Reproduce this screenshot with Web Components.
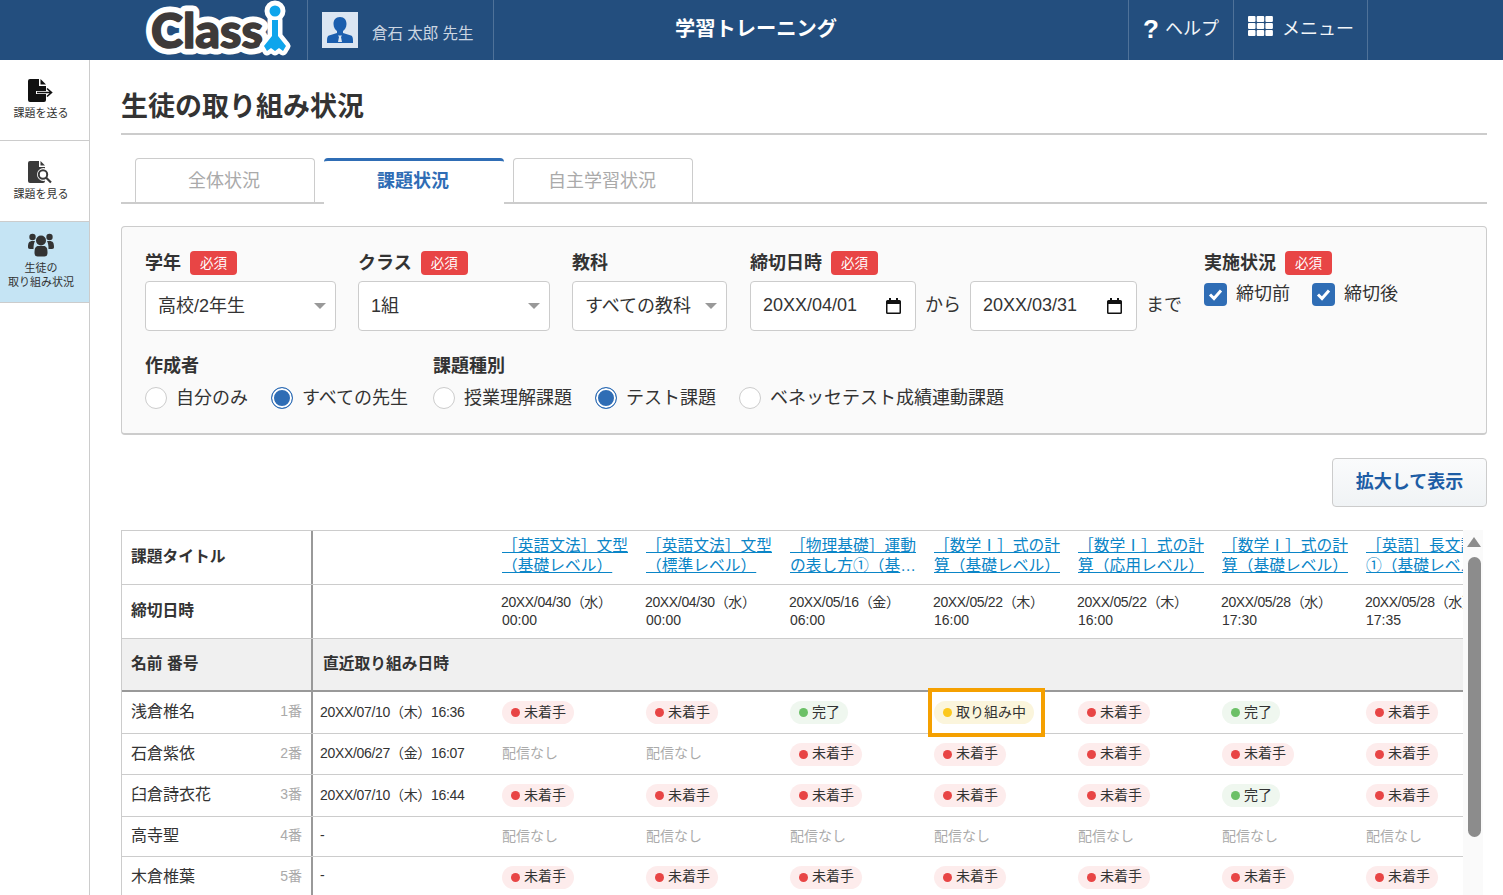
<!DOCTYPE html>
<html lang="ja">
<head>
<meta charset="utf-8">
<title>生徒の取り組み状況</title>
<style>
    html, body {
        margin: 0;
        height: 100%;
        overflow: hidden;
        background: #fff;
        color: #333;
        font-family: "Liberation Sans", "Noto Sans CJK JP", sans-serif;
    }
</style>
</head>
<body>

<app-shell>
    <app-header slot="header" user="倉石 太郎 先生" title="学習トレーニング"></app-header>

    <side-nav slot="nav">
        <nav-item>
            <svg slot="icon" width="26" height="24" viewBox="0 0 26 24">
                <path fill="#111" d="M2 0h9v7h7v5H8v3h10v6a2 2 0 0 1-2 2H2a2 2 0 0 1-2-2V2a2 2 0 0 1 2-2z"/>
                <path fill="#111" d="M12.500 0l5.500 5.500h-5.500z"/>
                <path fill="none" stroke="#111" stroke-width="1.600" d="M9 13.500h14M19 9.500l4.500 4-4.500 4"/>
            </svg>
            課題を送る
        </nav-item>
        <nav-item>
            <svg slot="icon" width="26" height="24" viewBox="0 0 26 24">
                <path fill="#3a3a3a" d="M2 1h9v6h6v14a2 2 0 0 1-2 2H2a2 2 0 0 1-2-2V3a2 2 0 0 1 2-2z"/>
                <path fill="#3a3a3a" d="M12.500 1l4.500 4.500h-4.500z"/>
                <circle cx="15.500" cy="14.500" r="6.500" fill="#fff"/>
                <circle cx="15" cy="14.500" r="4.200" fill="none" stroke="#3a3a3a" stroke-width="2"/>
                <path stroke="#3a3a3a" stroke-width="2.200" d="M18 17.500l5 5"/>
            </svg>
            課題を見る
        </nav-item>
        <nav-item active>
            <svg slot="icon" width="26" height="24" viewBox="0 0 26 24">
                <g fill="#333">
                    <circle cx="4.500" cy="4" r="3.200"/>
                    <circle cx="21.500" cy="4" r="3.200"/>
                    <path d="M0 14c0-4 1-6 4.500-6H7c-1 2-1.500 4-1.500 8H2c-1.500 0-2-1-2-2zM26 14c0-4-1-6-4.500-6H19c1 2 1.500 4 1.500 8H24c1.500 0 2-1 2-2z"/>
                    <circle cx="13" cy="7.500" r="5"/>
                    <path d="M6.500 20c0-5 1-7 4-7h5c3 0 4 2 4 7 0 2.500-1.500 3.500-3 3.500h-7c-1.500 0-3-1-3-3.500z"/>
                </g>
            </svg>
            生徒の<br>取り組み状況
        </nav-item>
    </side-nav>

    <page-title>生徒の取り組み状況</page-title>

    <tab-bar>
        <tab-item>全体状況</tab-item>
        <tab-item active>課題状況</tab-item>
        <tab-item>自主学習状況</tab-item>
    </tab-bar>

    <filter-panel>
        <filter-group slot="top" label="学年" required>
            <select-box width="191">高校/2年生</select-box>
        </filter-group>
        <filter-group slot="top" label="クラス" required>
            <select-box width="192">1組</select-box>
        </filter-group>
        <filter-group slot="top" label="教科">
            <select-box width="155">すべての教科</select-box>
        </filter-group>
        <filter-group slot="top" label="締切日時" required class="dates">
            <date-box width="166">20XX/04/01</date-box>
            <span class="word">から</span>
            <date-box>20XX/03/31</date-box>
            <span class="word">まで</span>
        </filter-group>
        <filter-group slot="top" label="実施状況" required gap="22">
            <check-box>締切前</check-box>
            <check-box>締切後</check-box>
        </filter-group>

        <filter-group slot="bottom" label="作成者" small gap="23">
            <radio-box>自分のみ</radio-box>
            <radio-box checked>すべての先生</radio-box>
        </filter-group>
        <filter-group slot="bottom" label="課題種別" small gap="23">
            <radio-box>授業理解課題</radio-box>
            <radio-box checked>テスト課題</radio-box>
            <radio-box>ベネッセテスト成績連動課題</radio-box>
        </filter-group>
    </filter-panel>

    <action-bar><action-button>拡大して表示</action-button></action-bar>

    <status-table>
        <table-row height="54" name="課題タイトル" strong>
            <title-link>［英語文法］文型（基礎レベル）</title-link>
            <title-link>［英語文法］文型（標準レベル）</title-link>
            <title-link>［物理基礎］運動の表し方①（基礎レベル）</title-link>
            <title-link>［数学Ⅰ］式の計算（基礎レベル）</title-link>
            <title-link>［数学Ⅰ］式の計算（応用レベル）</title-link>
            <title-link>［数学Ⅰ］式の計算（基礎レベル）</title-link>
            <title-link>［英語］長文読解①（基礎レベル）</title-link>
        </table-row>
        <table-row height="54" name="締切日時" strong>
            <due-date day="20XX/04/30（水）" time="00:00"></due-date>
            <due-date day="20XX/04/30（水）" time="00:00"></due-date>
            <due-date day="20XX/05/16（金）" time="06:00"></due-date>
            <due-date day="20XX/05/22（木）" time="16:00"></due-date>
            <due-date day="20XX/05/22（木）" time="16:00"></due-date>
            <due-date day="20XX/05/28（水）" time="17:30"></due-date>
            <due-date day="20XX/05/28（水）" time="17:35"></due-date>
        </table-row>
        <table-row height="53" name="名前 番号" recent="直近取り組み日時" strong shaded></table-row>
        <table-row height="42" name="浅倉椎名" no="1番" recent="20XX/07/10（木）16:36">
            <status-pill state="todo"></status-pill>
            <status-pill state="todo"></status-pill>
            <status-pill state="done"></status-pill>
            <status-pill state="doing" marked></status-pill>
            <status-pill state="todo"></status-pill>
            <status-pill state="done"></status-pill>
            <status-pill state="todo"></status-pill>
        </table-row>
        <table-row height="41" name="石倉紫依" no="2番" recent="20XX/06/27（金）16:07">
            <status-pill state="none"></status-pill>
            <status-pill state="none"></status-pill>
            <status-pill state="todo"></status-pill>
            <status-pill state="todo"></status-pill>
            <status-pill state="todo"></status-pill>
            <status-pill state="todo"></status-pill>
            <status-pill state="todo"></status-pill>
        </table-row>
        <table-row height="42" name="臼倉詩衣花" no="3番" recent="20XX/07/10（木）16:44">
            <status-pill state="todo"></status-pill>
            <status-pill state="todo"></status-pill>
            <status-pill state="todo"></status-pill>
            <status-pill state="todo"></status-pill>
            <status-pill state="todo"></status-pill>
            <status-pill state="done"></status-pill>
            <status-pill state="todo"></status-pill>
        </table-row>
        <table-row height="40" name="高寺聖" no="4番" recent="-">
            <status-pill state="none"></status-pill>
            <status-pill state="none"></status-pill>
            <status-pill state="none"></status-pill>
            <status-pill state="none"></status-pill>
            <status-pill state="none"></status-pill>
            <status-pill state="none"></status-pill>
            <status-pill state="none"></status-pill>
        </table-row>
        <table-row height="41" name="木倉椎葉" no="5番" recent="-">
            <status-pill state="todo"></status-pill>
            <status-pill state="todo"></status-pill>
            <status-pill state="todo"></status-pill>
            <status-pill state="todo"></status-pill>
            <status-pill state="todo"></status-pill>
            <status-pill state="todo"></status-pill>
            <status-pill state="todo"></status-pill>
        </table-row>
    </status-table>
</app-shell>

<script>
function shadow(host, html) {

    host.attachShadow({mode: 'open'}).innerHTML = html;
}

class AppShell extends HTMLElement {

    constructor() {

        super();

        shadow(this, `
            <style>
                :host {
                    display: flex;
                    flex-direction: column;
                    height: 895px;
                    overflow: hidden;
                }

                .body {
                    display: flex;
                    flex: 1;
                    min-height: 0;
                }

                main {
                    flex: 1;
                    min-width: 0;
                    padding: 0 16px 0 31px;
                }
            </style>
            <slot name="header"></slot>
            <div class="body">
                <slot name="nav"></slot>
                <main><slot></slot></main>
            </div>
        `);
    }
}

class AppHeader extends HTMLElement {

    constructor() {

        super();

        shadow(this, `
            <style>
                :host {
                    display: flex;
                    flex: none;
                    height: 60px;
                    background: #234e7e;
                    color: #fff;
                }

                .cell {
                    display: flex;
                    align-items: center;
                    border-right: 1px solid #4f7299;
                    box-sizing: border-box;
                }

                .logo { width: 308px; padding-left: 143px; }
                .user { width: 186px; padding-left: 14px; }
                .name { margin: 4px 0 0 14px; font-size: 15.500px; color: #ccd6e2; white-space: nowrap; }
                .title { width: 635px; justify-content: center; padding: 0 110px 6px 0; font-size: 20.250px; font-weight: 700; }
                .help { width: 105px; padding: 0 0 6px 14px; font-size: 18px; }
                .menu { width: 134px; padding: 0 0 6px 14px; font-size: 18px; }
                .mark { position: relative; top: 2px; font-size: 26px; font-weight: 700; margin-right: 6px; }
                .help span:last-child, .menu span { color: #f2f5f8; }
                .grid { margin: -2px 9px 0 0; }
            </style>
            <div class="cell logo">
                <svg width="150" height="60" viewBox="0 0 150 60">
                    <g font-family="Lato, 'Liberation Sans', sans-serif" font-weight="900" font-size="47" stroke-linejoin="round">
                        <text x="8" y="48" textLength="112" lengthAdjust="spacingAndGlyphs" fill="#fff" stroke="#fff" stroke-width="13">Class</text>
                        <text x="8" y="48" textLength="112" lengthAdjust="spacingAndGlyphs" fill="#3e3a39" stroke="#3e3a39" stroke-width="1.500">Class</text>
                    </g>
                    <g fill="#fff" stroke="#fff" stroke-width="9" stroke-linejoin="round">
                        <circle cx="132" cy="11" r="6"/>
                        <path d="M129 20h6v16l8 10-3 5-4-3-4 3-4-3-4 3-3-5 8-10z"/>
                    </g>
                    <circle cx="132" cy="11" r="5.500" fill="#0ea5ec"/>
                    <path fill="#0ea5ec" d="M129 20h6v16l8 10-3 5-4-3-4 3-4-3-4 3-3-5 8-10z"/>
                </svg>
            </div>
            <div class="cell user">
                <svg width="36" height="36" viewBox="0 0 36 36">
                    <rect width="36" height="36" fill="#dce6f2"/>
                    <path fill="#1b5eae" d="M18 5c4.500 0 6.500 3 6.500 7 0 3.500-2 6-3.500 7v2l8 2.500c1.500.5 2 2 2 5.500v2H5v-2c0-3.500.5-5 2-5.500l8-2.500v-2c-1.500-1-3.500-3.500-3.500-7 0-4 2-7 6.500-7z"/>
                    <path fill="#dce6f2" d="M16 23.500h4l-1 1.500 1 5h-4l1-5z"/>
                </svg>
                <span class="name">${this.getAttribute('user')}</span>
            </div>
            <div class="cell title">${this.getAttribute('title')}</div>
            <div class="cell help"><span class="mark">?</span><span>ヘルプ</span></div>
            <div class="cell menu">
                <svg class="grid" width="25" height="20" viewBox="0 0 25 20" fill="#fff">
                    <rect width="7.500" height="6" rx="1"/><rect x="8.700" width="7.500" height="6" rx="1"/><rect x="17.400" width="7.500" height="6" rx="1"/>
                    <rect y="7" width="7.500" height="6" rx="1"/><rect x="8.700" y="7" width="7.500" height="6" rx="1"/><rect x="17.400" y="7" width="7.500" height="6" rx="1"/>
                    <rect y="14" width="7.500" height="6" rx="1"/><rect x="8.700" y="14" width="7.500" height="6" rx="1"/><rect x="17.400" y="14" width="7.500" height="6" rx="1"/>
                </svg>
                <span>メニュー</span>
            </div>
        `);
    }
}

class SideNav extends HTMLElement {

    constructor() {

        super();

        shadow(this, `
            <style>
                :host {
                    display: block;
                    flex: none;
                    width: 90px;
                    box-sizing: border-box;
                    border-right: 1px solid #ccc;
                }
            </style>
            <slot></slot>
        `);
    }
}

class NavItem extends HTMLElement {

    constructor() {

        super();

        shadow(this, `
            <style>
                :host {
                    display: flex;
                    flex-direction: column;
                    align-items: center;
                    box-sizing: border-box;
                    height: 81px;
                    padding: 19px 7px 0 0;
                    border-bottom: 1px solid #ccc;
                    font-size: 11px;
                    line-height: 14px;
                    text-align: center;
                    white-space: nowrap;
                    color: #333;
                }

                :host([active]) {
                    background: #c5e4f4;
                    padding-top: 11px;
                }

                .icon {
                    height: 24px;
                    margin-bottom: 3px;
                }

                :host([active]) .icon {
                    margin-bottom: 4px;
                }
            </style>
            <div class="icon"><slot name="icon"></slot></div>
            <div><slot></slot></div>
        `);
    }
}

class PageTitle extends HTMLElement {

    constructor() {

        super();

        shadow(this, `
            <style>
                :host {
                    display: block;
                    height: 75px;
                    box-sizing: border-box;
                    padding-top: 27px;
                    border-bottom: 2px solid #ccc;
                    font-size: 27px;
                    line-height: 40px;
                    font-weight: 700;
                    color: #333;
                }
            </style>
            <slot></slot>
        `);
    }
}

class TabBar extends HTMLElement {

    constructor() {

        super();

        shadow(this, `
            <style>
                :host {
                    display: flex;
                    gap: 9px;
                    margin-top: 23px;
                    padding-left: 14px;
                    height: 46px;
                    box-sizing: border-box;
                    border-bottom: 2px solid #ccc;
                }
            </style>
            <slot></slot>
        `);
    }
}

class TabItem extends HTMLElement {

    constructor() {

        super();

        shadow(this, `
            <style>
                :host {
                    display: flex;
                    align-items: center;
                    justify-content: center;
                    width: 180px;
                    height: 44px;
                    box-sizing: border-box;
                    padding: 0 2px 4px 0;
                    background: #fff;
                    border: 1px solid #ccc;
                    border-bottom: 0;
                    border-radius: 4px 4px 0 0;
                    font-size: 18px;
                    color: #aaa;
                }

                :host([active]) {
                    height: 46px;
                    border: 0;
                    border-top: 3px solid #2f6db5;
                    padding-bottom: 7px;
                    font-weight: 700;
                    color: #2f6db5;
                }
            </style>
            <slot></slot>
        `);
    }
}

class FilterPanel extends HTMLElement {

    constructor() {

        super();

        shadow(this, `
            <style>
                :host {
                    display: block;
                    height: 209px;
                    margin-top: 22px;
                    box-sizing: border-box;
                    padding: 24px 23px 0;
                    background: #fafafa;
                    border: 1px solid #ccc;
                    border-bottom-width: 2px;
                    border-radius: 4px;
                }

                .row {
                    display: flex;
                    gap: 22px;
                }

                .row + .row {
                    gap: 25px;
                    margin-top: 23px;
                }

                ::slotted(.dates) {
                    margin-left: 1px;
                }
            </style>
            <div class="row"><slot name="top"></slot></div>
            <div class="row"><slot name="bottom"></slot></div>
        `);
    }
}

class FilterGroup extends HTMLElement {

    constructor() {

        super();

        const small = this.hasAttribute('small');
        const gap = this.getAttribute('gap') || '9';
        const badge = this.hasAttribute('required') ? '<span class="badge">必須</span>' : '';

        shadow(this, `
            <style>
                :host { display: block; }

                .label {
                    display: flex;
                    align-items: center;
                    gap: 9px;
                    height: 24px;
                    margin-bottom: ${small ? 9 : 6}px;
                    font-size: 18px;
                    font-weight: 700;
                    white-space: nowrap;
                }

                .text {
                    margin-bottom: 4px;
                }

                .badge {
                    display: flex;
                    align-items: center;
                    justify-content: center;
                    box-sizing: border-box;
                    width: 47px;
                    height: 24px;
                    padding-bottom: 3px;
                    border-radius: 4px;
                    background: #e84545;
                    color: #fff;
                    font-size: 13.500px;
                    font-weight: 400;
                }

                .body {
                    display: flex;
                    gap: ${gap}px;
                }

                ::slotted(.word) {
                    align-self: center;
                    padding-bottom: 6px;
                    font-size: 18px;
                    color: #333;
                    white-space: nowrap;
                }
            </style>
            <div class="label"><span class="text">${this.getAttribute('label')}</span>${badge}</div>
            <div class="body"><slot></slot></div>
        `);
    }
}

class SelectBox extends HTMLElement {

    constructor() {

        super();

        shadow(this, `
            <style>
                :host {
                    display: flex;
                    align-items: center;
                    justify-content: space-between;
                    box-sizing: border-box;
                    width: ${this.getAttribute('width')}px;
                    height: 50px;
                    padding: 0 9px 0 12px;
                    background: #fff;
                    border: 1px solid #ccc;
                    border-radius: 4px;
                    font-size: 18px;
                    white-space: nowrap;
                }

                span {
                    margin-bottom: 4px;
                }

                i {
                    width: 0;
                    height: 0;
                    border: 6px solid transparent;
                    border-top-color: #999;
                    border-bottom: 0;
                }
            </style>
            <span><slot></slot></span><i></i>
        `);
    }
}

class DateBox extends HTMLElement {

    constructor() {

        super();

        shadow(this, `
            <style>
                :host {
                    display: flex;
                    align-items: center;
                    justify-content: space-between;
                    box-sizing: border-box;
                    width: ${this.getAttribute('width') || 167}px;
                    height: 50px;
                    padding: 0 14px 0 12px;
                    background: #fff;
                    border: 1px solid #ccc;
                    border-radius: 4px;
                    font-size: 18px;
                    white-space: nowrap;
                }

                span {
                    margin-bottom: 2px;
                }
            </style>
            <span><slot></slot></span>
            <svg width="15" height="16" viewBox="0 0 15 16">
                <path fill="#111" d="M3 0h2v2h5V0h2v2h1.500A1.500 1.500 0 0 1 15 3.500v11a1.500 1.500 0 0 1-1.500 1.500h-12A1.500 1.500 0 0 1 0 14.500v-11A1.500 1.500 0 0 1 1.500 2H3zM1.500 6v8.500h12V6z"/>
            </svg>
        `);
    }
}

class CheckBox extends HTMLElement {

    constructor() {

        super();

        shadow(this, `
            <style>
                :host {
                    display: flex;
                    align-items: flex-start;
                    gap: 9px;
                    margin-top: 2px;
                    font-size: 18px;
                    line-height: 22px;
                    white-space: nowrap;
                }
            </style>
            <svg width="23" height="23" viewBox="0 0 23 23">
                <rect width="23" height="23" rx="4" fill="#2f6db5"/>
                <path fill="none" stroke="#fff" stroke-width="3" d="M6 11.500l4 4 7-8"/>
            </svg>
            <span><slot></slot></span>
        `);
    }
}

class RadioBox extends HTMLElement {

    constructor() {

        super();

        shadow(this, `
            <style>
                :host {
                    display: flex;
                    align-items: center;
                    gap: 9px;
                    font-size: 18px;
                    line-height: 22px;
                    white-space: nowrap;
                }

                i {
                    width: 22px;
                    height: 22px;
                    box-sizing: border-box;
                    border: 1px solid #ccc;
                    border-radius: 50%;
                    background: #fff;
                }

                :host([checked]) i {
                    border-color: #2f6db5;
                    background: #2f6db5;
                    box-shadow: inset 0 0 0 2px #fff;
                }
            </style>
            <i></i><span><slot></slot></span>
        `);
    }
}

class ActionBar extends HTMLElement {

    constructor() {

        super();

        shadow(this, `
            <style>
                :host {
                    display: flex;
                    justify-content: flex-end;
                    margin-top: 23px;
                    height: 72px;
                }
            </style>
            <slot></slot>
        `);
    }
}

class ActionButton extends HTMLElement {

    constructor() {

        super();

        shadow(this, `
            <style>
                :host {
                    display: flex;
                    align-items: center;
                    justify-content: center;
                    width: 155px;
                    height: 49px;
                    box-sizing: border-box;
                    padding-bottom: 5px;
                    border: 1px solid #ccc;
                    border-radius: 4px;
                    background: linear-gradient(#fafbfc, #f0f3f5);
                    color: #1d5da5;
                    font-size: 18px;
                    font-weight: 700;
                }
            </style>
            <slot></slot>
        `);
    }
}

class StatusTable extends HTMLElement {

    constructor() {

        super();

        shadow(this, `
            <style>
                :host {
                    display: flex;
                }

                .view {
                    width: 1342px;
                    overflow: hidden;
                    box-sizing: border-box;
                    border-top: 1px solid #ccc;
                    border-left: 1px solid #ccc;
                }

                .rows {
                    width: 1400px;
                }

                .bar {
                    position: relative;
                    width: 20px;
                    height: 365px;
                    background: #fafafa;
                }

                .up {
                    position: absolute;
                    left: 4px;
                    top: 7px;
                    border: 7px solid transparent;
                    border-bottom: 10px solid #8c8c8c;
                    border-top: 0;
                }

                .thumb {
                    position: absolute;
                    left: 5px;
                    top: 27px;
                    width: 13px;
                    height: 280px;
                    border-radius: 7px;
                    background: #8c8c8c;
                }
            </style>
            <div class="view"><div class="rows"><slot></slot></div></div>
            <div class="bar"><div class="up"></div><div class="thumb"></div></div>
        `);
    }
}

class TableRow extends HTMLElement {

    constructor() {

        super();

        const no = this.getAttribute('no');
        const recent = this.getAttribute('recent') || '';

        shadow(this, `
            <style>
                :host {
                    display: grid;
                    grid-template-columns: 191px 189px repeat(7, 144px);
                    box-sizing: border-box;
                    height: ${this.getAttribute('height')}px;
                    border-bottom: 1px solid #ccc;
                    font-size: 16px;
                    color: #333;
                }

                :host([shaded]) {
                    background: #f0f0f0;
                    border-bottom: 2px solid #999;
                }

                .name {
                    display: flex;
                    align-items: center;
                    justify-content: space-between;
                    box-sizing: border-box;
                    padding: 0 9px 5px 9px;
                    border-right: 2px solid #999;
                    white-space: nowrap;
                }

                :host([strong]) .name,
                :host([strong]) .recent {
                    font-size: 15.750px;
                    font-weight: 700;
                }

                .no {
                    font-size: 14px;
                    color: #aaa;
                }

                .recent {
                    display: flex;
                    align-items: center;
                    padding: 0 0 4px 7px;
                    font-size: 14px;
                    white-space: nowrap;
                    letter-spacing: -.32px;
                }

                :host([strong]) .recent {
                    padding: 0 0 5px 10px;
                    letter-spacing: 0;
                }
            </style>
            <div class="name"><span>${this.getAttribute('name')}</span>${no ? `<span class="no">${no}</span>` : ''}</div>
            <div class="recent">${recent}</div>
            <slot></slot>
        `);
    }
}

class TitleLink extends HTMLElement {

    constructor() {

        super();

        shadow(this, `
            <style>
                :host {
                    display: block;
                    padding-top: 5px;
                }

                a {
                    display: -webkit-box;
                    -webkit-box-orient: vertical;
                    -webkit-line-clamp: 2;
                    overflow: hidden;
                    width: 127px;
                    font-size: 15.750px;
                    line-height: 20px;
                    color: #0a85c7;
                    text-decoration: underline;
                }
            </style>
            <a href="#"><slot></slot></a>
        `);
    }
}

class DueDate extends HTMLElement {

    constructor() {

        super();

        shadow(this, `
            <style>
                :host {
                    display: flex;
                    flex-direction: column;
                    justify-content: center;
                    padding-bottom: 2px;
                    font-size: 14px;
                    line-height: 18px;
                    white-space: nowrap;
                }

                .day {
                    margin-left: -1px;
                    letter-spacing: -.35px;
                }
            </style>
            <span class="day">${this.getAttribute('day')}</span>
            <span>${this.getAttribute('time')}</span>
        `);
    }
}

class StatusPill extends HTMLElement {

    constructor() {

        super();

        const labels = {todo: '未着手', done: '完了', doing: '取り組み中', none: '配信なし'};
        const state = this.getAttribute('state');

        shadow(this, `
            <style>
                :host {
                    position: relative;
                    display: flex;
                    align-items: center;
                    font-size: 14px;
                }

                .pill {
                    display: flex;
                    align-items: center;
                    gap: 4px;
                    height: 23px;
                    padding: 0 8px 0 9px;
                    border-radius: 12px;
                    white-space: nowrap;
                }

                .pill span {
                    margin-bottom: 4px;
                }

                .pill i {
                    width: 9px;
                    height: 9px;
                    border-radius: 50%;
                }

                .todo { background: #fdecec; }
                .todo i { background: #e84545; }
                .done { background: #eff7ef; }
                .done i { background: #6cc067; }
                .doing { background: #fbf5dc; }
                .doing i { background: #fcc81e; }

                .none {
                    padding: 0;
                    color: #aaa;
                }

                .none i {
                    display: none;
                }

                .marker {
                    position: absolute;
                    left: -6px;
                    top: -4px;
                    width: 117px;
                    height: 49px;
                    box-sizing: border-box;
                    border: 4px solid #f5a000;
                }
            </style>
            <div class="pill ${state}"><i></i><span>${labels[state]}</span></div>
            ${this.hasAttribute('marked') ? '<div class="marker"></div>' : ''}
        `);
    }
}

window.customElements.define('app-shell', AppShell);
window.customElements.define('app-header', AppHeader);
window.customElements.define('side-nav', SideNav);
window.customElements.define('nav-item', NavItem);
window.customElements.define('page-title', PageTitle);
window.customElements.define('tab-bar', TabBar);
window.customElements.define('tab-item', TabItem);
window.customElements.define('filter-panel', FilterPanel);
window.customElements.define('filter-group', FilterGroup);
window.customElements.define('select-box', SelectBox);
window.customElements.define('date-box', DateBox);
window.customElements.define('check-box', CheckBox);
window.customElements.define('radio-box', RadioBox);
window.customElements.define('action-bar', ActionBar);
window.customElements.define('action-button', ActionButton);
window.customElements.define('status-table', StatusTable);
window.customElements.define('table-row', TableRow);
window.customElements.define('title-link', TitleLink);
window.customElements.define('due-date', DueDate);
window.customElements.define('status-pill', StatusPill);
</script>
</body>
</html>
